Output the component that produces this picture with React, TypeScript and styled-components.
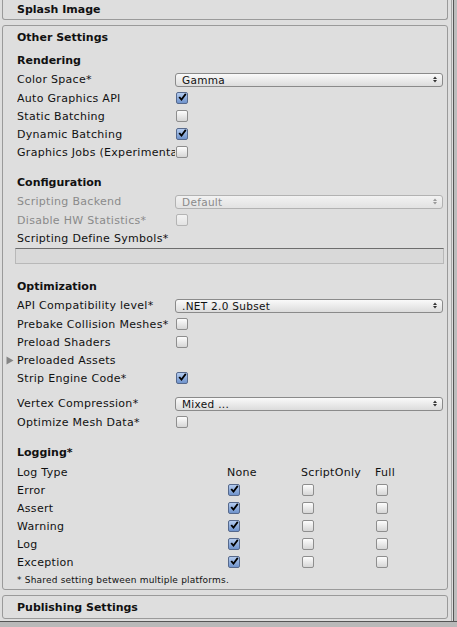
import React from 'react';
import styled, { createGlobalStyle, css } from 'styled-components';

const GlobalStyle = createGlobalStyle`
  html, body {
    margin: 0;
    padding: 0;
    background: #dedede;
  }
  body {
    font-family: "DejaVu Sans", "Liberation Sans", sans-serif;
    font-size: 11px;
    color: #111;
  }
`;

const Window = styled.div`
  width: 457px;
  height: 627px;
  display: flex;
  flex-direction: column;
  overflow: hidden;
`;

const Body = styled.div`
  height: 621px;
  display: flex;
`;

const Inspector = styled.div`
  width: 446px;
  padding: 0 3px 0 2px;
  display: flex;
  flex-direction: column;
  gap: 5px;
`;

const ScrollGutter = styled.div`
  flex: 1;
  display: flex;
  border-left: 1px solid #a6a6a6;
  padding-left: 1px;
`;

const ScrollTrack = styled.div`
  flex: 1;
  border-left: 1px solid #565656;
  background: #bdbdbd;
`;

const BottomEdge = styled.div`
  flex: 1;
  border-top: 1px solid #555;
  background: #b9b9b9;
`;

const Box = styled.section<{ $clipped?: boolean }>`
  border: 1px solid #9a9a9a;
  border-radius: 3px;
  ${p =>
    p.$clipped &&
    css`
      border-top: none;
      border-radius: 0 0 3px 3px;
    `}
`;

const BoxHeader = styled.div<{ $h?: number }>`
  height: ${p => p.$h ?? 22}px;
  padding-left: 14px;
  display: flex;
  align-items: center;
  font-weight: bold;
`;

const Content = styled.div`
  padding: 3px 3px 0 14px;
  display: flex;
  flex-direction: column;
`;

const Heading = styled.div<{ $gap?: number }>`
  height: 19px;
  margin-top: ${p => p.$gap ?? 0}px;
  display: flex;
  align-items: center;
  font-weight: bold;
`;

const Row = styled.div<{ $h?: number; $gap?: number }>`
  height: ${p => p.$h ?? 18}px;
  margin-top: ${p => p.$gap ?? 0}px;
  display: grid;
  grid-template-columns: 158px 268px;
  align-items: center;
`;

const Label = styled.span<{ $disabled?: boolean; $fold?: boolean }>`
  display: flex;
  align-items: center;
  white-space: nowrap;
  overflow: ${p => (p.$fold ? 'visible' : 'hidden')};
  letter-spacing: 0.3px;
  color: ${p => (p.$disabled ? '#8a8a8a' : '#111')};
`;

const FoldArrow = styled.svg`
  width: 8px;
  height: 9px;
  margin-left: -11px;
  margin-right: 3px;
  flex: none;
`;

const Popup = styled.div<{ $disabled?: boolean }>`
  height: 14px;
  box-sizing: border-box;
  border: 1px solid ${p => (p.$disabled ? '#b2b2b2' : '#8a8a8a')};
  border-radius: 3px;
  background: ${p =>
    p.$disabled
      ? 'linear-gradient(#f2f2f2, #e2e2e2)'
      : 'linear-gradient(#fafafa, #dcdcdc)'};
  color: ${p => (p.$disabled ? '#8a8a8a' : '#111')};
  padding: 0 5px 0 6px;
  display: flex;
  align-items: center;
  justify-content: space-between;
  letter-spacing: 0.3px;
  font-size: 10.5px;
`;

const Arrows = styled.svg<{ $disabled?: boolean }>`
  width: 4px;
  height: 7px;
  fill: ${p => (p.$disabled ? '#999' : '#333')};
`;

const Box12 = styled.span<{ $checked?: boolean; $disabled?: boolean }>`
  width: 12px;
  height: 12px;
  box-sizing: border-box;
  margin-left: 1px;
  border-radius: 2px;
  display: flex;
  align-items: center;
  justify-content: center;
  border: 1px solid ${p => (p.$checked ? '#56698c' : p.$disabled ? '#b4b4b4' : '#8e8e8e')};
  background: ${p =>
    p.$checked
      ? 'linear-gradient(#b3cbef, #6f93cc)'
      : p.$disabled
      ? 'linear-gradient(#f3f3f3, #e3e3e3)'
      : 'linear-gradient(#fdfdfd, #d6d6d6)'};
`;

const Tick = styled.svg`
  width: 11px;
  height: 11px;
  margin-top: -1px;
`;

const TextField = styled.div`
  height: 16px;
  box-sizing: border-box;
  margin: 1px 0 0 -2px;
  border: 1px solid #b8b8b8;
  border-top-color: #6d6d6d;
  background: #d9d9d9;
`;

const LogGrid = styled.div`
  display: grid;
  grid-template-columns: 210px 74px 74px 1fr;
  grid-auto-rows: 18px;
  align-items: center;
  margin-top: 1px;
`;

const Cell = styled.span`
  letter-spacing: 0.3px;
  white-space: nowrap;
`;

const Footnote = styled.div`
  height: 18px;
  display: flex;
  align-items: center;
  font-size: 9px;
  letter-spacing: 0.2px;
`;

const Checkbox: React.FC<{ checked?: boolean; disabled?: boolean }> = ({ checked, disabled }) => (
  <Box12 $checked={checked} $disabled={disabled}>
    {checked && (
      <Tick viewBox="0 0 11 11">
        <path d="M1.6 5.6 L3.3 4.3 L4.8 6.3 L8.9 0.9 L10.4 2.1 L5 9.4 Z" fill="#000" />
      </Tick>
    )}
  </Box12>
);

const Select: React.FC<{ value: string; disabled?: boolean }> = ({ value, disabled }) => (
  <Popup $disabled={disabled}>
    <span>{value}</span>
    <Arrows viewBox="0 0 4 7" $disabled={disabled}>
      <path d="M0 3 L2 0.5 L4 3 Z M0 4 L2 6.5 L4 4 Z" />
    </Arrows>
  </Popup>
);

const logTypes = ['Error', 'Assert', 'Warning', 'Log', 'Exception'];

export default function App() {
  return (
    <>
      <GlobalStyle />
      <Window>
        <Body>
          <Inspector>
            <Box $clipped>
              <BoxHeader $h={19}>Splash Image</BoxHeader>
            </Box>

            <Box>
              <BoxHeader>Other Settings</BoxHeader>
              <Content>
                <Heading>Rendering</Heading>
                <Row $h={19}>
                  <Label>Color Space*</Label>
                  <Select value="Gamma" />
                </Row>
                <Row>
                  <Label>Auto Graphics API</Label>
                  <Checkbox checked />
                </Row>
                <Row>
                  <Label>Static Batching</Label>
                  <Checkbox />
                </Row>
                <Row>
                  <Label>Dynamic Batching</Label>
                  <Checkbox checked />
                </Row>
                <Row>
                  <Label>Graphics Jobs (Experimental)</Label>
                  <Checkbox />
                </Row>

                <Heading $gap={12}>Configuration</Heading>
                <Row $h={19}>
                  <Label $disabled>Scripting Backend</Label>
                  <Select value="Default" disabled />
                </Row>
                <Row>
                  <Label $disabled>Disable HW Statistics*</Label>
                  <Checkbox disabled />
                </Row>
                <Row>
                  <Label>Scripting Define Symbols*</Label>
                </Row>
                <TextField />

                <Heading $gap={13}>Optimization</Heading>
                <Row $h={19}>
                  <Label>API Compatibility level*</Label>
                  <Select value=".NET 2.0 Subset" />
                </Row>
                <Row>
                  <Label>Prebake Collision Meshes*</Label>
                  <Checkbox />
                </Row>
                <Row>
                  <Label>Preload Shaders</Label>
                  <Checkbox />
                </Row>
                <Row>
                  <Label $fold>
                    <FoldArrow viewBox="0 0 8 9">
                      <path d="M0.5 0.5 L7.5 4.5 L0.5 8.5 Z" fill="#858585" />
                    </FoldArrow>
                    Preloaded Assets
                  </Label>
                </Row>
                <Row>
                  <Label>Strip Engine Code*</Label>
                  <Checkbox checked />
                </Row>
                <Row $h={19} $gap={7}>
                  <Label>Vertex Compression*</Label>
                  <Select value="Mixed ..." />
                </Row>
                <Row>
                  <Label>Optimize Mesh Data*</Label>
                  <Checkbox />
                </Row>

                <Heading $gap={12}>Logging*</Heading>
                <LogGrid>
                  <Cell>Log Type</Cell>
                  <Cell>None</Cell>
                  <Cell>ScriptOnly</Cell>
                  <Cell>Full</Cell>
                  {logTypes.map(t => (
                    <React.Fragment key={t}>
                      <Cell>{t}</Cell>
                      <Checkbox checked />
                      <Checkbox />
                      <Checkbox />
                    </React.Fragment>
                  ))}
                </LogGrid>
                <Footnote>* Shared setting between multiple platforms.</Footnote>
              </Content>
            </Box>

            <Box>
              <BoxHeader>Publishing Settings</BoxHeader>
            </Box>
          </Inspector>
          <ScrollGutter>
            <ScrollTrack />
          </ScrollGutter>
        </Body>
        <BottomEdge />
      </Window>
    </>
  );
}
